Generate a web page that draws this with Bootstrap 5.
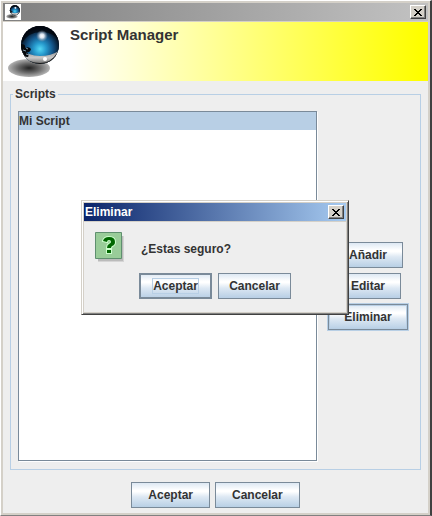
<!DOCTYPE html>
<html lang="es">
<head>
<meta charset="utf-8">
<meta name="viewport" content="width=device-width, initial-scale=1">
<title>Script Manager</title>
<link rel="stylesheet" href="https://cdn.jsdelivr.net/npm/bootstrap@5.3.0/dist/css/bootstrap.min.css">
<style>
body{font:bold 12px/18px "Liberation Sans",Arial,sans-serif;color:#333;background:#eee}
.frame{min-height:100vh;background:#eee;border:1px solid;border-color:#fff #404040 #808080 #fff;box-shadow:inset 0 0 0 2px #d4d0c8;padding:2px}
.frame-main{border-right-width:2px;position:relative}
.titlebar{height:19px;padding:0 2px}
.title-main{background:linear-gradient(90deg,#808080,#c2c2c2);border-bottom:1px solid #d4d0c8}
.title-dialog{background:linear-gradient(90deg,#0a246a,#a6caf0);color:#fff;border-bottom:1px solid #d4d0c8;padding:0 2px 0 1px}
.app-icon{width:16px;height:16px;background:#fff}
.close-btn{width:16px;height:14px;padding:0;border:1px solid;border-color:#fff #404040 #404040 #fff;background:#d4d0c8;box-shadow:inset -1px -1px #808080;display:flex;align-items:center;justify-content:center}
.banner{height:59px;background:linear-gradient(90deg,#fff 16%,#ff0 98%)}
.banner h1{font-size:15px;line-height:18px;font-weight:bold;color:#333;margin-left:7px}
.logo{width:60px;height:59px;flex:none}
.group{border:1px solid #b8cfe5;margin:14px 7px 0 7px;padding:0 12px 8px 7px}
.group legend{float:none;width:auto;font-size:12px;line-height:18px;font-weight:bold;padding:0 2px;margin:0 0 0 -5px}
.script-list{height:350px;background:#fff;border:1px solid #7a8a99;box-shadow:1px 1px #fff}
.script-list .list-group-item{padding:0;line-height:18px;border:0;border-radius:0;background:#b8cfe5;color:#333}
.side{padding-top:131px;width:80px;margin-left:11px;gap:5px}
.metal{font:bold 12px/18px "Liberation Sans",Arial,sans-serif;color:#333;border:1px solid #7a8a99;border-radius:0;height:26px;padding:3px 16px;background:linear-gradient(#dde8f3,#fff 30%,#fff 36%,#dde8f3 58%,#b8cfe5)}
.side .metal{padding:3px 15px}
.metal-hot{outline:1px solid #b8cfe5;box-shadow:inset 0 0 0 1px #b8cfe5}
.metal-default{box-shadow:inset 0 0 0 1px #7a8a99}
.focus-text{outline:1px solid #b8cfe5}
.dialog-box{position:absolute;left:80px;top:199px;width:268px;min-height:0;margin:0;border-color:#d4d0c8 #404040 #404040 #d4d0c8;box-shadow:inset 1px 1px #fff,inset -1px -1px #808080,inset 0 0 0 2px #d4d0c8}
.dialog-box .metal{padding:3px 10px;min-width:73px}
.msg{font-size:12px;padding:10px 11px 0 11px}
.msg-text{padding-top:3px}
.dialog-actions{gap:6px;padding:11px 0 13px}
.bottom{gap:5px;padding:12px 0 4px}
</style>
<script src="https://cdn.jsdelivr.net/npm/bootstrap@5.3.0/dist/js/bootstrap.bundle.min.js"></script>
</head>
<body>
<svg width="0" height="0" class="position-absolute" aria-hidden="true">
<defs>
<radialGradient id="shade"><stop offset="0" stop-color="#222"/><stop offset=".5" stop-color="#666"/><stop offset="1" stop-color="#b4b4b4"/></radialGradient>
<radialGradient id="ball" cx=".5" cy=".6" r=".52"><stop offset="0" stop-color="#55d8f5"/><stop offset=".3" stop-color="#2598cc"/><stop offset=".62" stop-color="#145488"/><stop offset="1" stop-color="#030914"/></radialGradient>
<radialGradient id="glint"><stop offset="0" stop-color="#fff"/><stop offset=".35" stop-color="#dbe4ef"/><stop offset="1" stop-color="#778899" stop-opacity="0"/></radialGradient>
<linearGradient id="chrome" x2="0" y2="1"><stop offset="0" stop-color="#777"/><stop offset=".6" stop-color="#c8c8c8"/><stop offset="1" stop-color="#555"/></linearGradient>
<clipPath id="round"><circle cx="37" cy="23" r="19"/></clipPath>
<symbol id="orb" viewBox="0 0 60 59">
<ellipse cx="26" cy="46" rx="21" ry="9" fill="url(#shade)"/>
<circle cx="37" cy="23" r="19" fill="#07101c"/>
<g clip-path="url(#round)">
<rect x="17" y="3" width="40" height="40" fill="url(#ball)"/>
<path d="M17 3h40v16q-6-8-17-9-14-1-21 11z" fill="#02060d" opacity=".7"/>
<path d="M17 25q7 9 20 9 12 0 20-6v15H17z" fill="url(#chrome)"/>
<path d="M19 34q7 7 18 7 11 0 17-10-3 13-17 13-12 0-18-10z" fill="#151515"/>
<path d="M18 22q5 0 4 4 4-2 6 1-1 4-5 3 4 2 2 5-5 0-8-5z" fill="#05080c"/>
<path d="M20 28l3 1m0-3l2 1m-2 5l3 1" stroke="#8299aa"/>
<circle cx="42" cy="37" r="2" fill="#fff"/>
</g>
<circle cx="39" cy="14" r="6" fill="url(#glint)"/>
</symbol>
</defs>
</svg>
<main class="frame frame-main d-flex flex-column">
<header class="titlebar title-main d-flex align-items-center justify-content-between">
<svg class="app-icon" aria-hidden="true"><use href="#orb"/></svg>
<button class="close-btn" type="button" aria-label="Cerrar ventana"><svg width="8" height="7" viewBox="0 0 8 7" shape-rendering="crispEdges"><path d="M0 0h2v1h1v1h2V1h1V0h2v1H7v1H6v1H5v1h1v1h1v1h1v1H6V6H5V5H3v1H2v1H0V6h1V5h1V4h1V3H2V2H1V1H0z"/></svg></button>
</header>
<div class="banner d-flex">
<svg class="logo" aria-hidden="true"><use href="#orb"/></svg>
<h1 class="mb-0 pt-1">Script Manager</h1>
</div>
<fieldset class="group mt-1">
<legend>Scripts</legend>
<div class="d-flex align-items-start">
<ul class="script-list list-group flex-grow-1 mb-0 mt-2 rounded-0"><li class="list-group-item active">Mi Script</li></ul>
<div class="side d-flex flex-column align-items-center mt-2">
<button class="metal" type="button">Añadir</button>
<button class="metal" type="button">Editar</button>
<button class="metal metal-hot" type="button">Eliminar</button>
</div>
</div>
</fieldset>
<footer class="bottom d-flex justify-content-center">
<button class="metal" type="button">Aceptar</button>
<button class="metal" type="button">Cancelar</button>
</footer>
<section class="frame dialog-box" role="dialog" aria-labelledby="dialog-title">
<header class="titlebar title-dialog d-flex align-items-center justify-content-between">
<span id="dialog-title">Eliminar</span>
<button class="close-btn" type="button" aria-label="Cerrar"><svg width="8" height="7" viewBox="0 0 8 7" shape-rendering="crispEdges"><path d="M0 0h2v1h1v1h2V1h1V0h2v1H7v1H6v1H5v1h1v1h1v1h1v1H6V6H5V5H3v1H2v1H0V6h1V5h1V4h1V3H2V2H1V1H0z"/></svg></button>
</header>
<div class="msg d-flex align-items-center gap-3">
<svg width="30" height="30" viewBox="0 0 30 30" aria-hidden="true"><path d="M3 4h26v26H3z" fill="#bbb" opacity=".5"/><path d="M3 4h25v25H3z" fill="#aaa" opacity=".6"/><path d="M.5.500h26v26H.5z" fill="#9c9" stroke="#5f8f6f"/><path id="ask" d="M8 9q1-4 6-4 6 0 6 5 0 3-3 4-1 1-1 2h-4q0-3 2-4 2-1 2-2 0-2-2-2-2 0-2 2zM12 18h4v3h-4z" fill="#060" stroke="#cfc" stroke-width="2" paint-order="stroke"/></svg>
<span class="msg-text">¿Estas seguro?</span>
</div>
<div class="dialog-actions d-flex justify-content-center">
<button class="metal metal-default" type="button"><span class="focus-text">Aceptar</span></button>
<button class="metal" type="button">Cancelar</button>
</div>
</section>
</main>
</body>
</html>
